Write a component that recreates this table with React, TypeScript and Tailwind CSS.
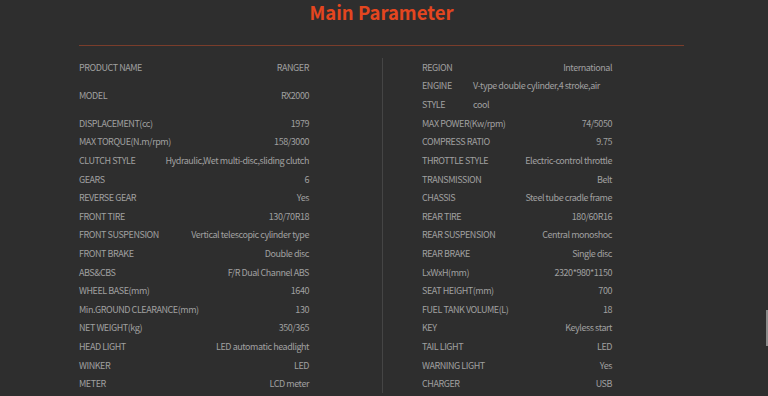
import React from "react";

const left: [string, string][] = [
  ["PRODUCT NAME", "RANGER"],
  ["MODEL", "RX2000"],
  ["DISPLACEMENT(cc)", "1979"],
  ["MAX TORQUE(N.m/rpm)", "158/3000"],
  ["CLUTCH STYLE", "Hydraulic,Wet multi-disc,sliding clutch"],
  ["GEARS", "6"],
  ["REVERSE GEAR", "Yes"],
  ["FRONT TIRE", "130/70R18"],
  ["FRONT SUSPENSION", "Vertical telescopic cylinder type"],
  ["FRONT BRAKE", "Double disc"],
  ["ABS&CBS", "F/R Dual Channel ABS"],
  ["WHEEL BASE(mm)", "1640"],
  ["Min.GROUND CLEARANCE(mm)", "130"],
  ["NET WEIGHT(kg)", "350/365"],
  ["HEAD LIGHT", "LED automatic headlight"],
  ["WINKER", "LED"],
  ["METER", "LCD meter"],
];

const right: [string, string][] = [
  ["REGION", "International"],
  ["ENGINE", ""],
  ["MAX POWER(Kw/rpm)", "74/5050"],
  ["COMPRESS RATIO", "9.75"],
  ["THROTTLE STYLE", "Electric-control throttle"],
  ["TRANSMISSION", "Belt"],
  ["CHASSIS", "Steel tube cradle frame"],
  ["REAR TIRE", "180/60R16"],
  ["REAR SUSPENSION", "Central monoshoc"],
  ["REAR BRAKE", "Single disc"],
  ["LxWxH(mm)", "2320*980*1150"],
  ["SEAT HEIGHT(mm)", "700"],
  ["FUEL TANK VOLUME(L)", "18"],
  ["KEY", "Keyless start"],
  ["TAIL LIGHT", "LED"],
  ["WARNING LIGHT", "Yes"],
  ["CHARGER", "USB"],
];

const font = { fontFamily: '"Noto Sans CJK SC", "Noto Sans", sans-serif' };

function Row({ l, v, tall }: { l: string; v: string; tall?: boolean }) {
  return (
    <div
      className={
        "flex items-center justify-between " + (tall ? "h-[37.2px]" : "h-[18.6px]")
      }
    >
      <span className="whitespace-nowrap">{l}</span>
      <span className="whitespace-nowrap">{v}</span>
    </div>
  );
}

export default function App() {
  return (
    <div
      className="relative w-[768px] h-[396px] overflow-hidden bg-[#2e2e2e] text-[#a0a0a0]"
      style={font}
    >
      <div className="ml-[79px] w-[605px]">
        <h1 className="text-center text-[18.5px] leading-[24px] font-bold text-[#e4461f]">
          Main Parameter
        </h1>
        <div className="mt-[21px] h-px bg-[#7a3d2b]" />
        <div className="flex text-[9px] tracking-[-0.45px] mt-[12px]">
          <div className="w-[230px] pt-[0.5px]">
            {left.map(([l, v], i) => (
              <Row key={l} l={l} v={v} tall={i === 1} />
            ))}
          </div>
          <div className="ml-[73px] w-px bg-[#454545]" />
          <div className="ml-[39px] w-[190px] pt-[0.5px]">
            {right.map(([l, v], i) =>
              i === 1 ? (
                <div key={l} className="flex h-[37.2px] items-center">
                  <span className="w-[51px] leading-[18.6px]">
                    ENGINE
                    <br />
                    STYLE
                  </span>
                  <span className="leading-[18.6px] whitespace-nowrap">
                    V-type double cylinder,4 stroke,air
                    <br />
                    cool
                  </span>
                </div>
              ) : (
                <Row key={l} l={l} v={v} />
              )
            )}
          </div>
        </div>
      </div>
      <div className="absolute right-0 top-[310px] h-[36px] w-[2px] bg-[#8a8a8a]" />
    </div>
  );
}
